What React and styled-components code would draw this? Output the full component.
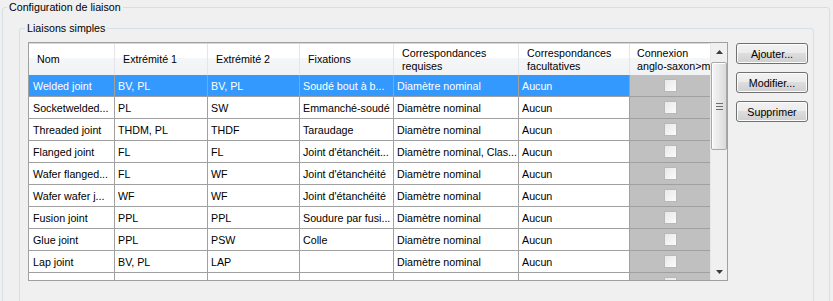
import styled, { createGlobalStyle } from "styled-components"

const GlobalStyle = createGlobalStyle`
  html, body {
    margin: 0;
    padding: 0;
    overflow: hidden;
    background: #f0f0f0;
  }
  body {
    font-family: "Liberation Sans", Arial, sans-serif;
    font-size: 10.7px;
    color: #000;
  }
`

const columns = [
  { key: "nom", title: "Nom", width: 86 },
  { key: "e1", title: "Extrémité 1", width: 93 },
  { key: "e2", title: "Extrémité 2", width: 92 },
  { key: "fix", title: "Fixations", width: 94 },
  { key: "req", title: ["Correspondances", "requises"], width: 125 },
  { key: "fac", title: ["Correspondances", "facultatives"], width: 111 },
  { key: "cx", title: ["Connexion", "anglo-saxon>m"], width: 80 },
]

const template = columns.map((c) => c.width + "px").join(" ")

const rows = [
  ["Welded joint", "BV, PL", "BV, PL", "Soudé bout à b...", "Diamètre nominal", "Aucun"],
  ["Socketwelded...", "PL", "SW", "Emmanché-soudé", "Diamètre nominal", "Aucun"],
  ["Threaded joint", "THDM, PL", "THDF", "Taraudage", "Diamètre nominal", "Aucun"],
  ["Flanged joint", "FL", "FL", "Joint d'étanchéit...", "Diamètre nominal, Clas...", "Aucun"],
  ["Wafer flanged...", "FL", "WF", "Joint d'étanchéité", "Diamètre nominal", "Aucun"],
  ["Wafer wafer j...", "WF", "WF", "Joint d'étanchéité", "Diamètre nominal", "Aucun"],
  ["Fusion joint", "PPL", "PPL", "Soudure par fusi...", "Diamètre nominal", "Aucun"],
  ["Glue joint", "PPL", "PSW", "Colle", "Diamètre nominal", "Aucun"],
  ["Lap joint", "BV, PL", "LAP", "", "Diamètre nominal", "Aucun"],
  ["", "", "", "", "", ""],
]

export default function App() {
  return (
    <>
      <GlobalStyle />
      <Page>
        <GroupBox>
          <Legend $offset={4}>Configuration de liaison</Legend>
          <OuterBody>
            <GroupBox>
              <Legend $offset={5}>Liaisons simples</Legend>
              <InnerBody>
                <Grid>
                  <GridMain>
                    <HeaderRow>
                      {columns.map((c) => (
                        <HeaderCell key={c.key}>
                          {Array.isArray(c.title) ? (
                            <span>
                              {c.title[0]}
                              <br />
                              {c.title[1]}
                            </span>
                          ) : (
                            c.title
                          )}
                        </HeaderCell>
                      ))}
                    </HeaderRow>
                    <RowsArea>
                      {rows.map((r, i) => (
                        <Row key={i}>
                          {r.map((v, j) => (
                            <Cell key={j} $selected={i === 0}>
                              {v}
                            </Cell>
                          ))}
                          <CheckCell>
                            <CheckBox />
                          </CheckCell>
                        </Row>
                      ))}
                    </RowsArea>
                  </GridMain>
                  <ScrollBar>
                    <ArrowButton>
                      <svg width="7" height="4" viewBox="0 0 7 4">
                        <path d="M3.5 0 L7 4 L0 4 Z" fill="#3c3c3c" />
                      </svg>
                    </ArrowButton>
                    <Thumb>
                      <Grip>
                        <span />
                        <span />
                        <span />
                      </Grip>
                    </Thumb>
                    <Track />
                    <ArrowButton>
                      <svg width="7" height="4" viewBox="0 0 7 4">
                        <path d="M0 0 L7 0 L3.5 4 Z" fill="#3c3c3c" />
                      </svg>
                    </ArrowButton>
                  </ScrollBar>
                </Grid>
                <Buttons>
                  <Button>Ajouter...</Button>
                  <Button>Modifier...</Button>
                  <Button>Supprimer</Button>
                </Buttons>
              </InnerBody>
            </GroupBox>
          </OuterBody>
        </GroupBox>
      </Page>
    </>
  )
}

const Page = styled.div`
  padding: 0 3px 0 2px;
`

const GroupBox = styled.fieldset`
  margin: 0;
  padding: 0;
  border: 1px solid #d5dfe5;
  border-radius: 3px;
  min-width: 0;
`

const Legend = styled.legend`
  margin-left: ${(p) => p.$offset}px;
  padding: 0 2px;
  line-height: 14px;
  font-size: 10.7px;
`

const OuterBody = styled.div`
  padding: 7px 15px 0 16px;
`

const InnerBody = styled.div`
  display: flex;
  align-items: flex-start;
  gap: 8px;
  padding: 7px 5px 40px 8px;
`

const Grid = styled.div`
  display: flex;
  width: 698px;
  height: 237px;
  border: 1px solid #a0a0a0;
  background: #f0f0f0;
`

const GridMain = styled.div`
  display: flex;
  flex-direction: column;
  width: 681px;
  overflow: hidden;
`

const HeaderRow = styled.div`
  display: grid;
  grid-template-columns: ${template};
  height: 32px;
  flex-shrink: 0;
  background: linear-gradient(#ffffff 0, #ffffff 45%, #f5f6f8 46%, #f1f2f4 100%);
  border-top: 1px solid #d8d8d8;
  box-sizing: border-box;
`

const HeaderCell = styled.div`
  display: flex;
  align-items: center;
  padding-left: 8px;
  border-right: 1px solid #e3e5e8;
  line-height: 13px;
  white-space: nowrap;
  overflow: hidden;

  &:last-child {
    padding-left: 7px;
    border-right: none;
  }
`

const RowsArea = styled.div`
  flex: 1;
  overflow: hidden;
  background: #f0f0f0;
`

const Row = styled.div`
  display: grid;
  grid-template-columns: ${template};
  height: 22px;
`

const Cell = styled.div`
  display: flex;
  align-items: center;
  padding-left: 3px;
  background: ${(p) => (p.$selected ? "#3399ff" : "#ffffff")};
  color: ${(p) => (p.$selected ? "#ffffff" : "#000000")};
  border-right: 1px solid #a0a0a0;
  border-bottom: 1px solid #a0a0a0;
  white-space: nowrap;
  overflow: hidden;

  &:first-child {
    padding-left: 4px;
  }
`

const CheckCell = styled.div`
  display: flex;
  align-items: center;
  justify-content: center;
  background: #c0c0c0;
  border-bottom: 1px solid #a0a0a0;
`

const CheckBox = styled.div`
  width: 11px;
  height: 11px;
  border: 1px solid #b8b8b8;
  background: linear-gradient(135deg, #e8e8e8, #fbfbfb);
`

const ScrollBar = styled.div`
  display: flex;
  flex-direction: column;
  width: 17px;
  border-left: 1px solid #e8e8e8;
  background: #f0f0f0;
  box-sizing: border-box;
`

const ArrowButton = styled.div`
  display: flex;
  align-items: center;
  justify-content: center;
  height: 17px;
  flex-shrink: 0;
`

const Thumb = styled.div`
  display: flex;
  align-items: center;
  justify-content: center;
  height: 86px;
  margin: 2px 0 0 0;
  border: 1px solid #a8a8a8;
  border-radius: 2px;
  background: linear-gradient(90deg, #f6f6f6, #e6e6e6 60%, #dadada);
  box-shadow: inset 1px 1px 0 #ffffff;
`

const Grip = styled.div`
  display: flex;
  flex-direction: column;
  gap: 2px;

  span {
    display: block;
    width: 7px;
    height: 1px;
    background: #6e6e6e;
  }
`

const Track = styled.div`
  flex: 1;
`

const Buttons = styled.div`
  display: flex;
  flex-direction: column;
  gap: 8px;
  margin-top: 1px;
`

const Button = styled.button`
  width: 72px;
  height: 21px;
  padding: 0;
  font-family: "Liberation Sans", Arial, sans-serif;
  font-size: 10.7px;
  color: #000;
  border: 1px solid #707070;
  border-radius: 3px;
  background: linear-gradient(#f2f2f2 0, #ebebeb 49%, #dddddd 50%, #cfcfcf 100%);
  box-shadow: inset 0 0 0 1px #fcfcfc;
`
